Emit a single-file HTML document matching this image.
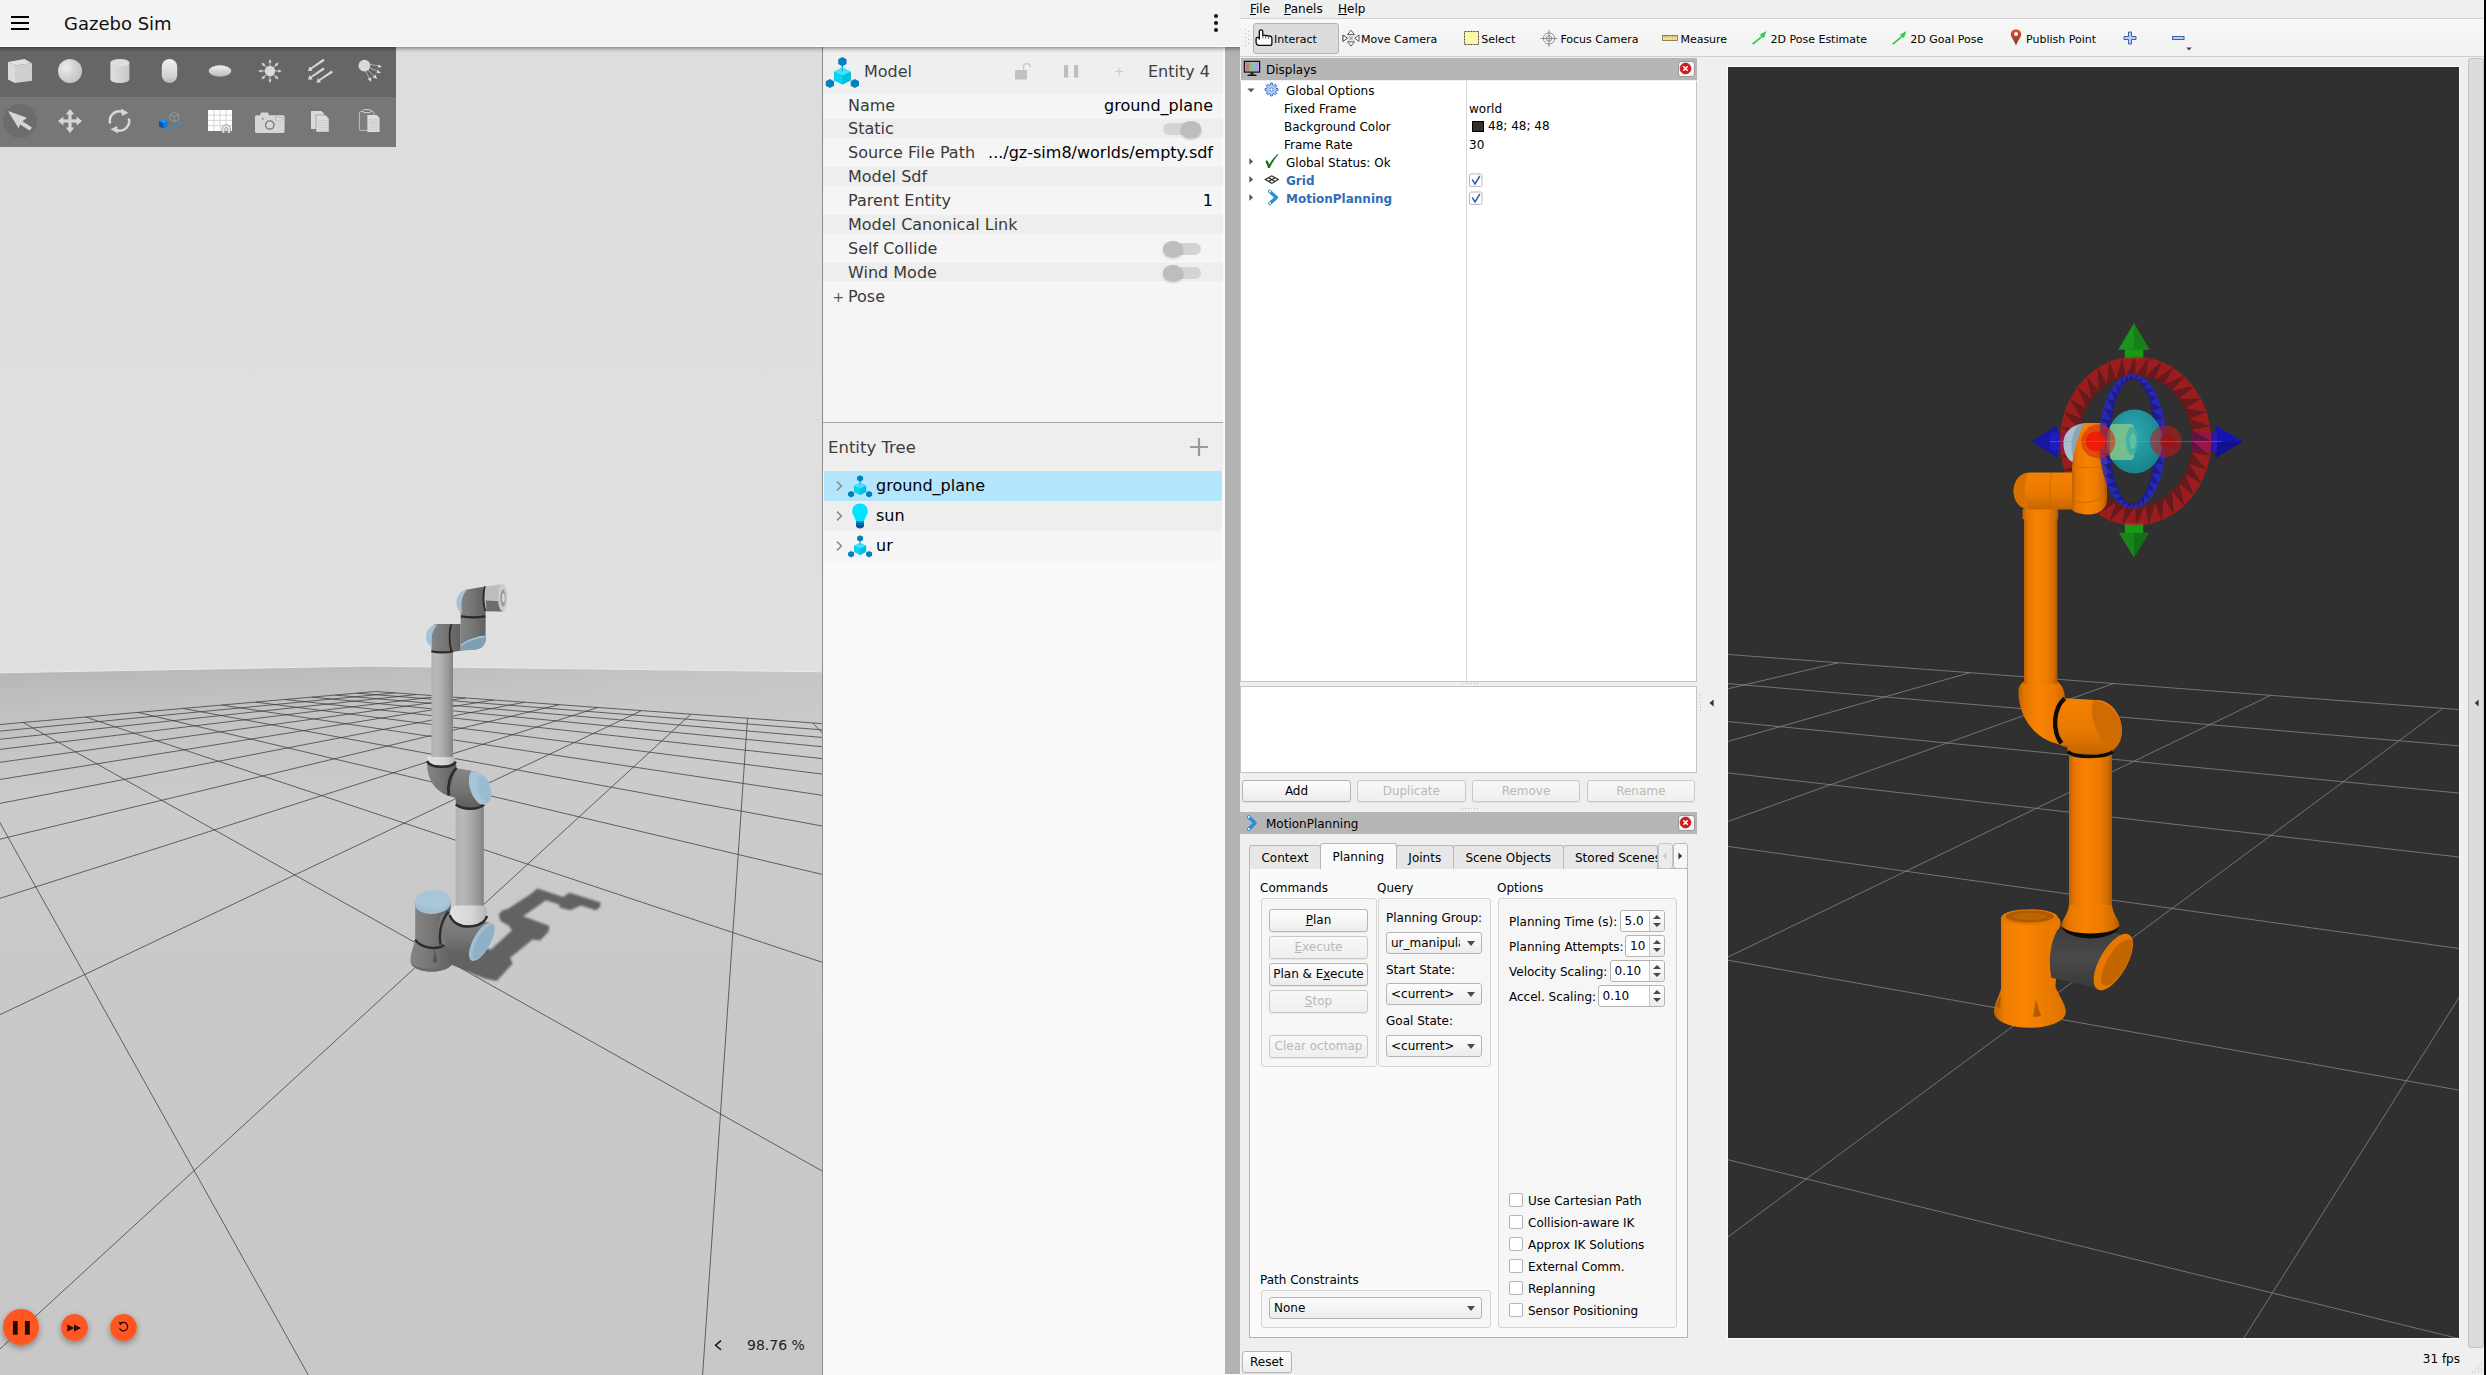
<!DOCTYPE html>
<html><head><meta charset="utf-8"><title>Gazebo Sim + RViz</title>
<style>
*{box-sizing:border-box;margin:0;padding:0}
html,body{width:2486px;height:1375px;overflow:hidden;background:#efefef;font-family:"DejaVu Sans","Liberation Sans",sans-serif;color:#000}
.abs{position:absolute}
#gz{position:absolute;left:0;top:0;width:1240px;height:1375px;background:#fafafa;overflow:hidden}
#gzhead{position:absolute;left:0;top:0;width:1240px;height:47px;background:#f3f3f3;border-bottom:1px solid #fdfdfd;z-index:5}
#gzshadow{position:absolute;left:0;top:47px;width:1240px;height:6px;background:linear-gradient(rgba(0,0,0,.36),rgba(0,0,0,.16) 35%,rgba(0,0,0,.05) 70%,rgba(0,0,0,0));z-index:5}
#gztitle{position:absolute;left:64px;top:12.5px;font-size:18px;line-height:22px;color:#111;white-space:nowrap}
.bar{position:absolute;left:11px;width:18px;height:2px;background:#000}
.kdot{position:absolute;left:1214px;width:4px;height:4px;border-radius:2px;background:#111}
#view{position:absolute;left:0;top:47px;width:822px;height:1328px;background:#dedede;overflow:hidden}
#tools{position:absolute;left:0;top:0;width:396px;height:100px}
#tools .r1{position:absolute;left:0;top:0;width:396px;height:50px;background:#666}
#tools .r2{position:absolute;left:0;top:50px;width:396px;height:50px;background:#777}
#panel{position:absolute;left:822px;top:47px;width:403px;height:1328px;background:#fafafa;border-left:1px solid #8a8a8a;font-size:16px}
#strip{position:absolute;left:1225px;top:47px;width:15px;height:1327px;background:#b2b2b2}
.prow{position:absolute;left:0;width:400px;height:24px;line-height:24px;white-space:nowrap}
.prow .l{position:absolute;left:25px;top:0;color:#3a3a3a}
.prow .v{position:absolute;right:10px;top:0;color:#000}
.d{background:#eeeeee}.lt{background:#f5f5f5}
.sw{position:absolute;left:340px;top:6px;width:38px;height:12px;border-radius:6px;background:#d4d4d4}
.sw i{position:absolute;top:-2.2px;width:20.4px;height:16.4px;border-radius:50%;background:#bdbdbd;box-shadow:0 1.5px 2.5px rgba(0,0,0,.22)}
.trow{position:absolute;left:1px;width:398px;height:30px;line-height:30px;white-space:nowrap}
.trow span{position:absolute;left:52px;top:0}
/* rviz */
#rv{position:absolute;left:1240px;top:0;width:1246px;height:1375px;background:#efefef;font-size:12px;color:#000}
#rv .t{position:absolute;white-space:nowrap;line-height:16px}
.dock{position:absolute;left:1px;width:456px;height:22px;background:#b6b6b6}
.xbtn{position:absolute;width:17px;height:16px;border:1px solid #9a9a9a;border-radius:3px;background:#f4f4f4}
.btn{position:absolute;height:22.5px;border:1px solid #b4b4b4;border-radius:3px;background:linear-gradient(#fdfdfd,#ececec);text-align:center;line-height:21px;white-space:nowrap;box-shadow:0 1px 0 rgba(0,0,0,.06)}
.btn.dis{color:#b9b9b9;background:linear-gradient(#f8f8f8,#efefef);border-color:#c9c9c9}
.combo{position:absolute;height:22px;border:1px solid #b4b4b4;border-radius:3px;background:linear-gradient(#fdfdfd,#ececec);line-height:21px;white-space:nowrap;overflow:hidden;padding-left:4px}
.combo:after{content:"";position:absolute;right:6px;top:8px;border-left:4px solid transparent;border-right:4px solid transparent;border-top:5px solid #4a4a4a}
.gb{position:absolute;border:1px solid #d4d4d4;border-radius:3px;background:#f6f6f6}
.spin{position:absolute;height:22px;border:1px solid #b4b4b4;border-radius:3px;background:#fff;line-height:21px;padding-left:4px;white-space:nowrap}
.spin b{position:absolute;right:0;top:0;width:15px;height:20px;border-left:1px solid #c8c8c8;background:linear-gradient(#fdfdfd,#ececec);border-radius:0 3px 3px 0}
.spin b:before{content:"";position:absolute;left:3px;top:4px;border-left:4px solid transparent;border-right:4px solid transparent;border-bottom:4px solid #4a4a4a}
.spin b:after{content:"";position:absolute;left:3px;top:12px;border-left:4px solid transparent;border-right:4px solid transparent;border-top:4px solid #4a4a4a}
.cb{position:absolute;width:14px;height:14px;border:1px solid #b4b4b4;border-radius:2px;background:#fff}
.tab{position:absolute;top:845px;height:24px;border:1px solid #b9b9b9;border-bottom:none;border-radius:3px 3px 0 0;background:#e7e7e7;text-align:center;line-height:25px;white-space:nowrap;overflow:hidden}
u{text-decoration:underline;text-underline-offset:1px}
</style></head><body>
<div id="gz">
<div id="gzhead">
 <div class="bar" style="top:16px"></div><div class="bar" style="top:22px"></div><div class="bar" style="top:28px"></div>
 <div id="gztitle">Gazebo Sim</div>
 <div class="kdot" style="top:14px"></div><div class="kdot" style="top:21px"></div><div class="kdot" style="top:28px"></div>
</div>
<div id="gzshadow"></div>
<div id="view">
<svg class="abs" style="left:0;top:0" width="822" height="1328" viewBox="0 47 822 1328">
<defs>
<linearGradient id="gnd" gradientUnits="userSpaceOnUse" x1="0" y1="666" x2="0" y2="1375"><stop offset="0" stop-color="#c5c5c5"/><stop offset="0.05" stop-color="#c9c9c9"/><stop offset="0.16" stop-color="#cbcbcb"/><stop offset="0.45" stop-color="#c9c9c9"/><stop offset="1" stop-color="#c8c8c8"/></linearGradient>
<linearGradient id="gdk" gradientUnits="userSpaceOnUse" x1="0" y1="666" x2="0" y2="800"><stop offset="0" stop-color="#000" stop-opacity="0.075"/><stop offset="0.35" stop-color="#000" stop-opacity="0.04"/><stop offset="1" stop-color="#000" stop-opacity="0"/></linearGradient>
<linearGradient id="gmx" gradientUnits="userSpaceOnUse" x1="0" y1="0" x2="822" y2="0"><stop offset="0" stop-color="#fff"/><stop offset="0.45" stop-color="#999"/><stop offset="0.75" stop-color="#222"/><stop offset="1" stop-color="#000"/></linearGradient>
<mask id="gmask" maskUnits="userSpaceOnUse" x="0" y="600" width="822" height="300"><rect x="0" y="600" width="822" height="300" fill="url(#gmx)"/></mask>
<linearGradient id="sky" gradientUnits="userSpaceOnUse" x1="0" y1="47" x2="0" y2="670"><stop offset="0" stop-color="#dddddd"/><stop offset="1" stop-color="#e0e0e0"/></linearGradient>
<linearGradient id="tube" x1="0" x2="1" y1="0" y2="0"><stop offset="0" stop-color="#b2b2b2"/><stop offset="0.25" stop-color="#b9b9b9"/><stop offset="0.6" stop-color="#a6a6a6"/><stop offset="0.85" stop-color="#929292"/><stop offset="1" stop-color="#808080"/></linearGradient>
<linearGradient id="jnt" x1="0" x2="1" y1="0" y2="0"><stop offset="0" stop-color="#848484"/><stop offset="0.5" stop-color="#757575"/><stop offset="1" stop-color="#606060"/></linearGradient>
<linearGradient id="jntv" x1="0" x2="0" y1="0" y2="1"><stop offset="0" stop-color="#868686"/><stop offset="0.55" stop-color="#747474"/><stop offset="1" stop-color="#5c5c5c"/></linearGradient>
<linearGradient id="col" x1="0" x2="1" y1="0" y2="0"><stop offset="0" stop-color="#e2e2e2"/><stop offset="0.6" stop-color="#d6d6d6"/><stop offset="1" stop-color="#b4b4b4"/></linearGradient>
<filter id="blur1"><feGaussianBlur stdDeviation="0.9"/></filter>
</defs>
<rect x="0" y="47" width="822" height="640" fill="url(#sky)"/>
<polygon points="0,672.8 367.3,666.1 822,671.8 822,1375 0,1375" fill="url(#gnd)"/>
<polygon points="0,672.8 367.3,666.1 822,671.8 822,800 0,800" fill="url(#gdk)" mask="url(#gmask)"/>
<polyline points="0,672.8 367.3,666.1 822,671.8" fill="none" stroke="#ececec" stroke-width="0.9"/>
<g stroke="#3c3c3c" stroke-width="0.85" stroke-opacity="0.9" fill="none"><line x1="375.7" y1="691.5" x2="-10987.9" y2="1690.6"/><line x1="375.7" y1="691.5" x2="2308.8" y2="830.6"/><line x1="395.3" y1="692.9" x2="-149972.3" y2="15237.8"/><line x1="356.6" y1="693.2" x2="2823.5" y2="887.5"/><line x1="416.6" y1="694.5" x2="-135000.3" y2="15248.7"/><line x1="335.4" y1="695.1" x2="3846.5" y2="1000.6"/><line x1="439.9" y1="696.2" x2="-120028.3" y2="15259.6"/><line x1="311.8" y1="697.1" x2="6864.9" y2="1334.3"/><line x1="465.5" y1="698.0" x2="-105056.4" y2="15270.4"/><line x1="285.4" y1="699.5" x2="134108.1" y2="15444.1"/><line x1="493.6" y1="700.0" x2="-90084.4" y2="15281.3"/><line x1="255.7" y1="702.1" x2="116108.8" y2="15431.1"/><line x1="524.6" y1="702.2" x2="-75112.4" y2="15292.2"/><line x1="221.9" y1="705.1" x2="98109.5" y2="15418.0"/><line x1="559.2" y1="704.7" x2="-60140.4" y2="15303.1"/><line x1="183.1" y1="708.5" x2="80110.2" y2="15404.9"/><line x1="597.9" y1="707.5" x2="-45168.4" y2="15313.9"/><line x1="138.2" y1="712.4" x2="62110.8" y2="15391.8"/><line x1="641.4" y1="710.7" x2="-30196.5" y2="15324.8"/><line x1="85.6" y1="717.0" x2="44111.5" y2="15378.8"/><line x1="690.9" y1="714.2" x2="-15224.5" y2="15335.7"/><line x1="23.1" y1="722.5" x2="26112.2" y2="15365.7"/><line x1="747.5" y1="718.3" x2="-252.5" y2="15346.5"/><line x1="-52.3" y1="729.2" x2="8112.9" y2="15352.6"/><line x1="812.8" y1="723.0" x2="14719.5" y2="15357.4"/><line x1="-145.1" y1="737.3" x2="-9886.4" y2="15339.6"/><line x1="889.3" y1="728.5" x2="29691.4" y2="15368.3"/><line x1="-262.1" y1="747.6" x2="-27885.7" y2="15326.5"/><line x1="979.8" y1="735.0" x2="44663.4" y2="15379.2"/><line x1="-414.3" y1="761.0" x2="-45885.0" y2="15313.4"/><line x1="1088.7" y1="742.8" x2="59635.4" y2="15390.0"/><line x1="-620.2" y1="779.1" x2="-63884.3" y2="15300.3"/><line x1="1222.3" y1="752.5" x2="74607.4" y2="15400.9"/><line x1="-914.4" y1="805.0" x2="-81883.6" y2="15287.3"/><line x1="1390.0" y1="764.5" x2="89579.4" y2="15411.8"/><line x1="-1369.4" y1="845.0" x2="-99882.9" y2="15274.2"/><line x1="1606.7" y1="780.1" x2="104551.3" y2="15422.7"/><line x1="-2166.3" y1="915.0" x2="-117882.2" y2="15261.1"/><line x1="1897.6" y1="801.1" x2="119523.3" y2="15433.5"/><line x1="-3922.5" y1="1069.4" x2="-135881.5" y2="15248.0"/><line x1="2308.8" y1="830.6" x2="134495.3" y2="15444.4"/><line x1="-10987.9" y1="1690.6" x2="-153880.9" y2="15235.0"/></g>
<polygon filter="url(#blur1)" fill="#626262" points="537.4,888.4 562.9,896.9 569.5,892.7 600.7,902.6 599.8,907.3 596.0,910.2 580.9,905.5 570.5,910.2 560.1,907.8 559.1,904.5 545.9,900.3 523.2,916.3 549.2,925.8 548.7,931.4 540.2,940.4 532.6,939.5 510.0,957.9 512.8,963.6 496.7,981.1 485.4,978.7 475.9,974.9 448,960 470,945 491,949.4 511.8,930.5 509,925.8 500.5,921 498.6,914.4 502.4,910.6 508.1,908.8 530.8,894.1"/>
<polygon fill="#626262" points="441,944 470,957 478,975 452,965"/>
<path d="M415,941 C413,948 410.4,954 410.4,961 C410.4,967 419.5,971.6 431.6,971.6 C443.8,971.6 452.9,967 452.9,961 C452.9,954 446,948 444.4,941 Z" fill="url(#jnt)"/><path d="M410.6,962 C411,967 419.500,971.6 431.6,971.6 C443.8,971.6 452.6,967 452.800,962 C452,966 443,968.6 431.6,968.6 C420,968.6 411.6,966 410.6,962 Z" fill="#6a6a6a"/><path d="M434.600,949 L432.8,962.6 L437.400,962 Z" fill="#565656"/><path d="M415.2,903 V941 C418,946 427,948.4 433,948.2 C438,948 442,946.6 444.4,944.6 L450.6,930 V903 Z" fill="url(#jnt)"/><path d="M446,914 L489.3,922.4 L470.300,958.4 L441,945.4 Z" fill="url(#jntv)"/><path d="M441.6,913.4 C438.4,921 437.600,933 439.400,941.6 C441,944.6 444,946.4 446.4,946.6 C443,937 443.600,924 447.800,914.600 Z" fill="#7a7a7a"/><path d="M415.2,939.6 C419,945.6 428,948.2 434,948 C439,947.8 442.4,946.4 444.2,944.8" fill="none" stroke="#2c2c2c" stroke-width="2.4"/><path d="M448.6,911.6 C441.6,919.6 438.4,932 440.6,944.6" fill="none" stroke="#2e2e2e" stroke-width="2.4"/><path d="M415.400,903.6 C415.4,896 423,890.2 433,890.2 C443,890.2 450.8,895 450.8,901 C450.8,904 449.6,907 447.6,909 C443,912.4 437,914 431,914 C424,914 418,911 415.400,907 Z" fill="#a5bfd1"/><ellipse cx="433" cy="899.8" rx="17.3" ry="9.5" fill="#a9c5d8"/><ellipse cx="481.8" cy="941.6" rx="8.6" ry="21.6" transform="rotate(29 481.8 941.6)" fill="#a3bed0"/><ellipse cx="483.4" cy="942" rx="6.6" ry="19.4" transform="rotate(29 483.4 942)" fill="#8fb0c6"/><rect x="455.6" y="806" width="28.2" height="108" fill="url(#tube)"/><path d="M449.800,913.6 C450,908 455,905.800 455.600,905.6 H483.600 C485,906 487,909 487,914 C487,918 484,925.4 468.4,925.4 C453,925.4 450,918 449.800,913.6 Z" fill="url(#col)"/><path d="M449.800,915 C452,922.4 460,926.6 468.400,926.6 C478,926.6 485,922.4 487,916" fill="none" stroke="#2a2a2a" stroke-width="2.5"/><path d="M427,763 C427,780 436,792 449.400,796 L456,798 L456.400,766 L455.800,763 Z" fill="url(#jnt)"/><path d="M449.200,795 L455.800,768 L476,771.4 L486,803 C481,807 476,808.4 470,808.4 C464,808.4 458.800,807 455.800,804.6 L455.800,798 Z" fill="url(#jntv)"/><path d="M456.6,768 C449.6,775 447,786 448.8,795.6" fill="none" stroke="#2b2b2b" stroke-width="2.6"/><path d="M455.800,804.4 C459,807.4 464,808.8 470,808.8 C476,808.8 481,807.4 484.200,804.4" fill="none" stroke="#2b2b2b" stroke-width="2.6"/><path d="M471.6,771.6 C478,770 487,776 490.4,785.6 C493,793.600 491,801.6 486.400,804 C484,805 481,804.6 479,803.4 C472,798 468,786 469,778 C469.400,774.600 470.400,772.400 471.600,771.600 Z" fill="#a7c4d8"/><ellipse cx="484" cy="789" rx="6.2" ry="14.4" transform="rotate(-14 484 789)" fill="#9bbbd0"/><path d="M427.400,757.6 C429,756.4 431,756 431.400,756 H452 C454,756.2 455.400,757.6 455.400,760 C455.400,763.6 449,765.800 441.400,765.800 C433,765.800 427.400,763.600 427.400,760 Z" fill="url(#col)"/><path d="M427.200,761 C429,765 435,766.800 441.400,766.800 C448,766.800 454,765 455.800,761.600" fill="none" stroke="#2b2b2b" stroke-width="2.6"/><rect x="431.4" y="652" width="21.6" height="105" fill="url(#tube)"/><path d="M431.4,652 V630 C431.400,626 434,624 437,624 H460.600 V650.800 L453.200,651.8 Z" fill="url(#jnt)"/><path d="M437.800,624.4 C431,624.8 426,630 426,636 C426,641.6 428.600,645.6 432,646.6 C430.400,640 431.600,630 437.800,624.400 Z" fill="#a5c2d6"/><path d="M431.4,651.2 C437,652.8 447,652.8 453.2,651.2" fill="none" stroke="#2a2a2a" stroke-width="2.1"/><path d="M451.4,624.4 C449,631 449,643 451.400,651" fill="none" stroke="#2a2a2a" stroke-width="1.8"/><path d="M460.600,650.800 V600 H485.600 V640 C485.600,645 480,649.800 473,649.800 C468,649.800 463,650.400 460.600,650.800 Z" fill="url(#jnt)"/><path d="M460.600,646 C466,640.6 478,636.4 485.400,636.400 C486.400,640 484.400,646.400 480,648.600 C474,650.400 465,650.600 460.600,649.800 Z" fill="#7ea0b6"/><path d="M460.800,645.8 C466,640.6 478,636.4 485.400,636.400" fill="none" stroke="#a6c3d6" stroke-width="1.6"/><path d="M461,616.4 C468,617.6 478,617.600 485.400,616.400" fill="none" stroke="#2a2a2a" stroke-width="2.1"/><path d="M467,589.600 L485,586.600 V611 L467,613.6 C462,612 460,606 460,601 C460,596 463,590.600 467,589.600 Z" fill="url(#jnt)"/><path d="M467.400,589.400 C461,590 456.400,596 456.400,602 C456.400,607.600 459,612 462.400,613.200 C460.400,606 461.400,595 467.400,589.400 Z" fill="#a5c2d6"/><path d="M485.400,586.400 C482.800,593 482.800,604 485.600,611" fill="none" stroke="#2a2a2a" stroke-width="2"/><path d="M485.800,586.600 L501.600,584.200 C505,584.400 507,590 507,597.600 C507,605 505,611 502.400,611.400 L486.400,611.200 C484,604 484,593 485.800,586.600 Z" fill="#bdbdbd"/><path d="M486,600.6 L503,601.4 L502.400,611.400 L486.400,611.200 Z" fill="#6c6c6c"/><ellipse cx="502.400" cy="597.600" rx="4.400" ry="13.400" fill="#cdcdcd"/><ellipse cx="503" cy="598" rx="2.600" ry="8.600" fill="#9a9a9a"/><ellipse cx="503.400" cy="598" rx="1.4" ry="4.400" fill="#d8d8d8"/>
</svg>
<div id="tools"><div class="r1"></div><div class="r2"></div>
<svg class="abs" style="left:0;top:0" width="396" height="100" viewBox="0 0 396 100">
<defs>
<radialGradient id="gsph" cx="0.33" cy="0.36" r="0.75"><stop offset="0" stop-color="#ececec"/><stop offset="0.6" stop-color="#d0d0d0"/><stop offset="1" stop-color="#c2c2c2"/></radialGradient>
<linearGradient id="gcyl" x1="0" x2="1"><stop offset="0" stop-color="#e0e0e0"/><stop offset="1" stop-color="#c8c8c8"/></linearGradient>
<linearGradient id="gcap" x1="0" x2="0" y1="0" y2="1"><stop offset="0" stop-color="#f0f0f0"/><stop offset="0.75" stop-color="#d2d2d2"/><stop offset="1" stop-color="#b4b4b4"/></linearGradient>
<linearGradient id="gell" x1="0" x2="0" y1="0" y2="1"><stop offset="0" stop-color="#f2f2f2"/><stop offset="1" stop-color="#b8b8b8"/></linearGradient>
</defs>
<!-- box -->
<g transform="translate(8,12)"><polygon points="0,3 16.5,0 24,4.3 7,6.6" fill="#e0e0e0"/><polygon points="0,3 7,6.6 7,24 0,20.5" fill="#dcdcdc"/><polygon points="7,6.6 24,4.3 24,21.8 7,24" fill="#cfcfd1"/></g>
<!-- sphere -->
<circle cx="70" cy="24" r="12" fill="url(#gsph)"/>
<!-- cylinder -->
<g transform="translate(108,12)"><path d="M2.4,3.8 V20.2 A9.5,3.8 0 0 0 21.4,20.2 V3.8 Z" fill="url(#gcyl)"/><ellipse cx="11.9" cy="3.8" rx="9.5" ry="3.8" fill="#dddddd"/></g>
<!-- capsule -->
<rect x="161.8" y="12" width="15.4" height="24" rx="7.7" ry="7.7" fill="url(#gcap)"/>
<!-- ellipsoid -->
<ellipse cx="220" cy="24" rx="11.3" ry="5.7" fill="url(#gell)"/>
<!-- point light -->
<g transform="translate(270,24)" fill="#d9d9d9" stroke="none"><circle r="5.2"/>
<g id="ray"><rect x="-0.4" y="-9" width="0.8" height="4"/><polygon points="0,-12 -1.6,-8.4 1.6,-8.4"/></g>
<use href="#ray" transform="rotate(45)"/><use href="#ray" transform="rotate(90)"/><use href="#ray" transform="rotate(135)"/><use href="#ray" transform="rotate(180)"/><use href="#ray" transform="rotate(225)"/><use href="#ray" transform="rotate(270)"/><use href="#ray" transform="rotate(315)"/></g>
<!-- directional -->
<g transform="translate(308,12)" fill="#d9d9d9"><g id="darr"><polygon points="15.2,-0.2 16.6,1.8 3.6,10.2 4.6,11.8 0,12 1.6,7.4 2.6,8.8"/></g><use href="#darr" transform="translate(0,8.6)"/><use href="#darr" transform="translate(8.4,11.6)"/></g>
<!-- spot -->
<g transform="translate(358,12)" fill="#d9d9d9" stroke="#d9d9d9" stroke-width="0.6"><circle cx="6.4" cy="6.6" r="5.9" stroke="none"/>
<line x1="10" y1="5" x2="21" y2="7"/><polygon points="24,7.4 20.4,5.4 20,9" stroke="none"/>
<line x1="10" y1="8" x2="20" y2="12.5"/><polygon points="23,14 19.6,10.8 18.6,14.2" stroke="none"/>
<line x1="9" y1="10" x2="16.5" y2="17.5"/><polygon points="19,20 17.6,15.6 14.6,18.2" stroke="none"/>
<line x1="7" y1="11" x2="11.5" y2="19.5"/><polygon points="13,23 13.4,18.4 9.6,19.8" stroke="none"/></g>
<!-- row 2 -->
<circle cx="20" cy="74" r="17" fill="#6c6c6c"/>
<polygon transform="translate(8,64)" points="0,0 19,6.8 14.4,10.2 24,16.4 21.6,19.5 12.2,13.4 10.6,17.2" fill="#d6d6d6"/>
<!-- move -->
<g transform="translate(70,74)" fill="#d6d6d6"><rect x="-1.6" y="-8" width="3.2" height="16"/><rect x="-8" y="-1.6" width="16" height="3.2"/><polygon points="0,-12 -4.4,-6.6 4.4,-6.6"/><polygon points="0,12 -4.4,6.6 4.4,6.6"/><polygon points="-12,0 -6.6,-4.4 -6.6,4.4"/><polygon points="12,0 6.6,-4.4 6.6,4.4"/></g>
<!-- rotate -->
<g transform="translate(119.5,74)" fill="none" stroke="#d6d6d6" stroke-width="2.5"><path d="M-9.3,2.6 A9.6,9.6 0 0 1 2.4,-9.3"/><path d="M9.3,-2.6 A9.6,9.6 0 0 1 -2.4,9.3"/><polygon points="9,-8.2 1.4,-12.6 2.4,-5" fill="#d6d6d6" stroke="none"/><polygon points="-9,8.2 -1.4,12.6 -2.4,5" fill="#d6d6d6" stroke="none"/></g>
<!-- snap -->
<g transform="translate(158,62)"><polygon points="5.2,10 9.6,12 9.6,17.4 5.2,19.6 1,17.4 1,12" fill="#1976d2"/><polygon points="5.2,10 9.6,12 5.4,14 1,12" fill="#2196f3"/><polygon points="1,12 5.4,14 5.4,19.6 1,17.4" fill="#0d57a8"/>
<g fill="none" stroke="#9fb0c0" stroke-width="0.6"><polygon points="16.4,3.4 20.6,5.4 20.6,10.6 16.4,12.8 12.2,10.6 12.2,5.4"/><polyline points="12.2,5.4 16.4,7.6 20.6,5.4"/><line x1="16.4" y1="7.6" x2="16.4" y2="12.8"/></g>
<polyline points="9.6,18.6 12,20 22.4,14 20.4,12.6" fill="none" stroke="#2196f3" stroke-width="1.1" stroke-dasharray="2.4,0.5"/></g>
<!-- grid -->
<g transform="translate(208,63)"><rect x="0" y="0" width="24" height="21" fill="#fff"/><g stroke="#cfcfcf" stroke-width="0.9"><line x1="6" y1="0" x2="6" y2="21"/><line x1="12" y1="0" x2="12" y2="21"/><line x1="18" y1="0" x2="18" y2="21"/><line x1="0" y1="5.2" x2="24" y2="5.2"/><line x1="0" y1="10.4" x2="24" y2="10.4"/><line x1="0" y1="15.6" x2="24" y2="15.6"/></g>
<path d="M14,23 V19 A4.2,4.2 0 0 1 22.4,19 V23 H19.6 V19 A1.4,1.4 0 0 0 16.8,19 V23 Z" fill="#e8e8e8" stroke="#8c8c8c" stroke-width="0.8"/></g>
<!-- camera -->
<g transform="translate(255,65)"><path d="M1.4,3.2 H5 L6.2,0.6 H13 L14,3.2 H28 Q29.6,3.2 29.6,4.8 V19.4 Q29.6,21 28,21 H1.4 Q0,21 0,19.4 V4.8 Q0,3.2 1.4,3.2 Z" fill="#d6d6d6"/><circle cx="14.8" cy="13" r="4.2" fill="none" stroke="#757575" stroke-width="1.3"/><rect x="20.6" y="5.6" width="6.4" height="2.4" fill="#e6e6e6" stroke="#9a9a9a" stroke-width="0.5"/><circle cx="7.8" cy="6.8" r="0.9" fill="#777"/></g>
<!-- copy -->
<g transform="translate(311,64)"><path d="M0,0 H10.4 L13,2.6 V18 H0 Z" fill="#d9d9d9"/><path d="M5,4 H14.6 L18,7.4 V21 H5 Z" fill="#dedede" stroke="#777" stroke-width="0.5"/><g stroke="#c4c4c4" stroke-width="0.7"><line x1="6.4" y1="9.4" x2="16.6" y2="9.4"/><line x1="6.4" y1="11.8" x2="16.6" y2="11.8"/><line x1="6.4" y1="14.2" x2="16.6" y2="14.2"/><line x1="6.4" y1="16.6" x2="16.6" y2="16.6"/><line x1="6.4" y1="19" x2="16.6" y2="19"/></g></g>
<!-- paste -->
<g transform="translate(359,62)"><rect x="0.4" y="2.4" width="14.6" height="19" rx="1.6" fill="#7d7d7d" stroke="#dcdcdc" stroke-width="0.7"/><rect x="4" y="0.6" width="8" height="3" rx="1.4" fill="#777" stroke="#dcdcdc" stroke-width="0.9"/><path d="M8.4,6 H17.6 L20.6,9 V23 H8.4 Z" fill="#dedede"/><g stroke="#c2c2c2" stroke-width="0.7"><line x1="9.6" y1="11" x2="19.4" y2="11"/><line x1="9.6" y1="13.4" x2="19.4" y2="13.4"/><line x1="9.6" y1="15.8" x2="19.4" y2="15.8"/><line x1="9.6" y1="18.2" x2="19.4" y2="18.2"/><line x1="9.6" y1="20.6" x2="19.4" y2="20.6"/></g></g>
</svg></div>
<!-- play controls -->
<svg class="abs" style="left:0;top:1250px" width="170" height="78" viewBox="0 0 170 78">
<defs><filter id="ds" x="-40%" y="-40%" width="180%" height="200%"><feDropShadow dx="0" dy="2.6" stdDeviation="3" flood-color="#000" flood-opacity="0.36"/></filter></defs>
<circle cx="21" cy="30" r="18" fill="#ff5722" filter="url(#ds)"/><rect x="12.9" y="24" width="4.8" height="13.7" fill="#2a0a00"/><rect x="24.9" y="24" width="4.9" height="13.7" fill="#2a0a00"/>
<circle cx="74.5" cy="30.400" r="13.4" fill="#ff5722" filter="url(#ds)"/><polygon points="67.4,27.6 74.2,31 67.4,34.4" fill="#2a0a00"/><polygon points="74,27.6 81,31 74,34.400" fill="#2a0a00"/>
<circle cx="123.5" cy="30.400" r="13.4" fill="#ff5722" filter="url(#ds)"/><path d="M120.6,26.6 A4.2,4.2 0 1 1 119.6,31.2" fill="none" stroke="#2a0a00" stroke-width="1.2"/><polygon points="118.6,25 122.6,25.2 120.4,28.400" fill="#2a0a00"/>
</svg>
<svg class="abs" style="left:712px;top:1290px" width="12" height="16" viewBox="0 0 12 16"><polyline points="9,3.6 3.6,8.2 9,12.8" fill="none" stroke="#111" stroke-width="1.5"/></svg>
<div class="abs" style="left:747px;top:1289px;font-size:14px;line-height:18px;color:#222;white-space:nowrap">98.76 %</div>
</div>
<div id="panel">
<svg width="0" height="0" style="position:absolute"><defs>
<g id="modelicon"><g stroke="#0288d1" stroke-width="1.2"><line x1="12" y1="5" x2="12" y2="13"/><line x1="12" y1="13" x2="4" y2="19"/><line x1="12" y1="13" x2="20" y2="19"/></g>
<polygon points="12,7 20,11 20,19.2 12,23.4 4,19.2 4,11" fill="#00c8ea"/><polygon points="12,7 20,11 12,15 4,11" fill="#42e3ff"/><polygon points="12,15 20,11 20,19.2 12,23.4" fill="#00bfe0"/><polygon points="12,15 4,11 4,19.2 12,23.4" fill="#0ad2f2"/>
<line x1="12" y1="7" x2="12" y2="11" stroke="#1ab4dc" stroke-width="1"/>
<polygon points="12,-3 16,-0.8 16,3.6 12,5.8 8,3.6 8,-0.8" fill="#0280be"/><polygon points="0,18 4,20.2 4,24.6 0,26.8 -4,24.6 -4,20.2" fill="#0280be"/><polygon points="24,18 28,20.2 28,24.6 24,26.8 20,24.6 20,20.2" fill="#0280be"/></g>
</defs></svg>
<div class="abs" style="left:0;top:0;width:400px;height:47px;background:#efefef"></div>
<svg class="abs" style="left:0;top:6px" width="44" height="38" viewBox="0 0 44 38"><use href="#modelicon" transform="translate(6.9,7.2) scale(1.04)"/></svg>
<div class="abs" style="left:41px;top:13px;line-height:24px;color:#3d3d3d">Model</div>
<svg class="abs" style="left:190px;top:12px" width="112" height="24" viewBox="0 0 112 24">
<rect x="2" y="11" width="12" height="9.4" rx="1" fill="#c2c2c2"/><path d="M10.6,11 V8 A3.3,3.3 0 0 1 17.2,8" fill="none" stroke="#c9c9c9" stroke-width="1.3"/>
<rect x="51" y="6.2" width="4.2" height="12.4" fill="#bdbdbd"/><rect x="61" y="6.2" width="4.2" height="12.4" fill="#bdbdbd"/>
<path d="M102.4,12.4 H110 M106.2,8.6 V16.2" stroke="#c8c8c8" stroke-width="1"/></svg>
<div class="abs" style="left:325px;top:13px;line-height:24px;color:#3d3d3d;white-space:nowrap">Entity 4</div>
<div class="abs" style="left:0;top:47px;width:400px;height:328px;background:#f5f5f5"></div>
<div class="prow" style="top:46.50px"><span class="l">Name</span><span class="v">ground_plane</span></div>
<div class="abs d" style="left:0;top:72.43px;width:400px;height:18.4px"></div>
<div class="prow" style="top:70.43px"><span class="l">Static</span><div class="sw"><i style="left:17.5px"></i></div></div>
<div class="prow" style="top:94.36px"><span class="l">Source File Path</span><span class="v">.../gz-sim8/worlds/empty.sdf</span></div>
<div class="abs d" style="left:0;top:120.29px;width:400px;height:18.4px"></div>
<div class="prow" style="top:118.29px"><span class="l">Model Sdf</span></div>
<div class="prow" style="top:142.22px"><span class="l">Parent Entity</span><span class="v" style="right:10px">1</span></div>
<div class="abs d" style="left:0;top:168.15px;width:400px;height:18.4px"></div>
<div class="prow" style="top:166.15px"><span class="l">Model Canonical Link</span></div>
<div class="prow" style="top:190.08px"><span class="l">Self Collide</span><div class="sw"><i style="left:0px"></i></div></div>
<div class="abs d" style="left:0;top:216.01px;width:400px;height:18.4px"></div>
<div class="prow" style="top:214.01px"><span class="l">Wind Mode</span><div class="sw"><i style="left:0px"></i></div></div>
<div class="prow" style="top:237.94px"><span class="l" style="left:9.5px;color:#555;font-size:14px">+</span><span class="l">Pose</span></div>
<div class="abs" style="left:0;top:375px;width:400px;height:1px;background:#a8a8a8"></div>
<div class="abs" style="left:0;top:376px;width:400px;height:48px;background:#eeeeee"></div>
<div class="abs" style="left:5px;top:389px;line-height:24px;font-size:16.5px;color:#3d3d3d;white-space:nowrap">Entity Tree</div>
<svg class="abs" style="left:366px;top:390px" width="20" height="20" viewBox="0 0 20 20"><path d="M1,10 H19 M10,1 V19" stroke="#9a9a9a" stroke-width="2.2"/></svg>
<div class="trow" style="top:424px;background:#b3e5fc"><span>ground_plane</span></div>
<div class="trow" style="top:454px;background:#eeeeee"><span>sun</span></div>
<div class="trow" style="top:484px;background:#f5f5f5"><span>ur</span></div>
<svg class="abs" style="left:0;top:424px" width="60" height="92" viewBox="0 0 60 92">
<g fill="none" stroke="#8a8a8a" stroke-width="1.5"><polyline points="14,10.6 18.4,15 14,19.4"/><polyline points="14,40.6 18.4,45 14,49.4"/><polyline points="14,70.6 18.4,75 14,79.4"/></g>
<use href="#modelicon" transform="translate(28.1,6.4) scale(0.75)"/>
<use href="#modelicon" transform="translate(28.1,66.4) scale(0.75)"/>
<g transform="translate(37,45)"><path d="M0,-12.6 C5,-12.6 7.8,-9 7.8,-5 C7.800,-1 4.800,1.6 4,5.400 H-4 C-4.800,1.6 -7.800,-1 -7.800,-5 C-7.800,-9 -5,-12.6 0,-12.600 Z" fill="#00e5ff"/><path d="M-4,5.4 H4 V9.6 Q4,12.4 0,12.4 Q-4,12.4 -4,9.6 Z" fill="#01579b"/><rect x="-4" y="5.4" width="8" height="1.6" fill="#0091c4"/><rect x="-4" y="7.6" width="8" height="1.2" fill="#0277a8"/></g>
</svg>
</div>
<div id="strip"></div>
</div>
<div id="rv">
<!-- menubar -->
<div class="abs" style="left:0;top:0;width:1246px;height:19px;background:#efefef;border-bottom:1px solid #d4d4d4"></div>
<div class="t" style="left:10px;top:1px"><u>F</u>ile</div>
<div class="t" style="left:44px;top:1px"><u>P</u>anels</div>
<div class="t" style="left:98px;top:1px"><u>H</u>elp</div>
<!-- toolbar -->
<div class="abs" style="left:0;top:19px;width:1246px;height:38px;background:linear-gradient(#f8f8f8,#f1f1f1);border-bottom:1px solid #cfcfcf"></div>
<svg class="abs" style="left:4px;top:28px" width="8" height="20" viewBox="0 0 8 20"><g fill="#b9b9b9"><rect x="1" y="1" width="1" height="1"/><rect x="4" y="3" width="1" height="1"/><rect x="1" y="5" width="1" height="1"/><rect x="4" y="7" width="1" height="1"/><rect x="1" y="9" width="1" height="1"/><rect x="4" y="11" width="1" height="1"/><rect x="1" y="13" width="1" height="1"/><rect x="4" y="15" width="1" height="1"/><rect x="1" y="17" width="1" height="1"/></g></svg>
<div class="abs" style="left:13px;top:23px;width:86px;height:31px;background:#dcdcdc;border:1px solid #b3b3b3;border-radius:3px"></div>
<div class="t" style="left:34px;top:31.5px;font-size:11px">Interact</div>
<div class="t" style="left:121px;top:31.5px;font-size:11px">Move Camera</div>
<div class="t" style="left:241.3px;top:31.5px;font-size:11px">Select</div>
<div class="t" style="left:320.4px;top:31.5px;font-size:11px">Focus Camera</div>
<div class="t" style="left:440.4px;top:31.5px;font-size:11px">Measure</div>
<div class="t" style="left:530.5px;top:31.5px;font-size:11px">2D Pose Estimate</div>
<div class="t" style="left:670.2px;top:31.5px;font-size:11px">2D Goal Pose</div>
<div class="t" style="left:786px;top:31.5px;font-size:11px">Publish Point</div>
<svg class="abs" style="left:0;top:19px" width="960" height="38" viewBox="0 0 960 38">
<!-- hand -->
<path d="M19.3,12.2 Q19.3,10.9 21,10.9 Q22.8,10.9 22.8,12.2 V16.6 Q24.4,15.6 25.6,16.8 Q27.2,16 28.4,17.2 Q30,16.6 31.2,17.600 Q31.9,18.2 31.9,19.400 V24.4 Q31.9,26.3 30,26.3 H19.4 Q16.1,26.3 16.1,23 V19.6 Q16.1,18.3 17.600,18.3 Q19.3,18.3 19.3,20 Z" fill="#fff" stroke="#0a0a0a" stroke-width="1.3" stroke-linejoin="round"/>
<path d="M22.8,16.600 V19.600 M25.700,17 V19.800 M28.600,17.400 V20" fill="none" stroke="#555" stroke-width="0.9"/>
<!-- move camera -->
<g transform="translate(111,19.2)" fill="#fff" stroke="#4a4a4a" stroke-width="0.9" stroke-linejoin="round"><polygon points="0,-8 -3.400,-3.600 3.400,-3.600"/><polygon points="0,8 -3.400,3.600 3.400,3.600"/><polygon points="-8,-3.2 -8,3.2 -3.600,0"/><polygon points="8,-3.2 8,3.2 3.600,0"/><polygon points="-8,-3.2 -3.6,0 -8,3.2" /><rect x="-1.6" y="-1.6" width="3.2" height="3.2" fill="#bdbdbd" stroke="none"/><path d="M-3.6,-3.600 L3.600,3.600 M3.600,-3.600 L-3.600,3.600" stroke-width="0.5" stroke-dasharray="1,1"/></g>
<!-- select -->
<rect x="224.500" y="12.500" width="14" height="13" fill="#fdf6a8" stroke="#333" stroke-width="0.9" stroke-dasharray="2,1"/>
<!-- focus -->
<g transform="translate(309,19.500)" fill="none" stroke="#777" stroke-width="0.8"><circle r="5.600"/><circle r="2.800"/><path d="M-8.400,0 H8.400 M0,-8.400 V8.400"/></g>
<!-- measure -->
<rect x="422.500" y="16.500" width="15" height="5" fill="#f2dc8e" stroke="#7a6a3a" stroke-width="0.8"/><path d="M425,16.500 v2 M427.500,16.500 v2 M430,16.500 v2 M432.500,16.500 v2 M435,16.500 v2" stroke="#7a6a3a" stroke-width="0.5"/>
<!-- green arrows -->
<polygon points="512.400,24.600 521.600,17 520.200,15.800 526,12.600 523.800,18.800 522.600,17.800 513.400,25.400" fill="#22d34a" stroke="#12a030" stroke-width="0.3"/>
<polygon points="652.400,24.600 661.600,17 660.200,15.800 666,12.600 663.800,18.800 662.600,17.800 653.400,25.400" fill="#22d34a" stroke="#12a030" stroke-width="0.3"/>
<!-- pin -->
<defs><linearGradient id="pin" x1="0" x2="0" y1="0" y2="1"><stop offset="0" stop-color="#e84b2a"/><stop offset="0.5" stop-color="#b5452a"/><stop offset="1" stop-color="#6a3a20"/></linearGradient></defs>
<path d="M776,26.400 C774,21 770.800,18 770.800,15.400 C770.800,12.400 773,10.600 776,10.600 C779,10.600 781.200,12.400 781.200,15.400 C781.200,18 778,21 776,26.400 Z" fill="url(#pin)"/><circle cx="776" cy="15" r="1.900" fill="#fff"/>
<!-- plus -->
<path d="M888.500,13 h3 v4.500 h4.500 v3 h-4.500 v4.500 h-3 v-4.500 h-4.500 v-3 h4.500 Z" fill="#b8cdf0" stroke="#3a62a8" stroke-width="1"/>
<!-- minus -->
<rect x="932.500" y="17.500" width="11.500" height="3" fill="#b8cdf0" stroke="#3a62a8" stroke-width="1"/>
<polygon points="946.400,28.600 951.600,28.600 949,31.400" fill="#444"/>
</svg>
<!-- Displays dock -->
<div class="dock" style="top:58px"></div>
<svg class="abs" style="left:3px;top:60px" width="18" height="18" viewBox="0 0 18 18"><rect x="1.500" y="1.500" width="15" height="10.500" fill="#fff" stroke="#111" stroke-width="1.400"/><rect x="2.400" y="2.400" width="4.400" height="8.800" fill="#c87a7a"/><rect x="6.800" y="2.400" width="4.400" height="8.800" fill="#84c884"/><rect x="11.200" y="2.400" width="4.400" height="8.800" fill="#a0a0f0"/><rect x="7.600" y="12.600" width="2.800" height="2" fill="#111"/><rect x="4.400" y="14.400" width="9.200" height="1.500" rx="0.7" fill="#111"/></svg>
<div class="t" style="left:26px;top:62px">Displays</div>
<div class="xbtn" style="left:437.5px;top:60.5px;width:17.5px;height:16.5px"></div>
<svg class="abs" style="left:439px;top:62px" width="13" height="13" viewBox="0 0 13 13"><circle cx="6.500" cy="6.500" r="5.400" fill="#d01a20" stroke="#a00e14" stroke-width="0.700"/><path d="M4.300,4.300 L8.700,8.700 M8.700,4.300 L4.300,8.700" stroke="#fff" stroke-width="1.600"/></svg>
<!-- tree -->
<div class="abs" style="left:0;top:81px;width:457px;height:601px;background:#fff;border:1px solid #c4c4c4;border-top:none"></div>
<div class="abs" style="left:226px;top:81px;width:1px;height:600px;background:#d9d9d9"></div>
<div class="t" style="left:46px;top:83px">Global Options</div>
<div class="t" style="left:44px;top:101px">Fixed Frame</div><div class="t" style="left:229px;top:101px">world</div>
<div class="t" style="left:44px;top:119px">Background Color</div><div class="abs" style="left:231.500px;top:120.500px;width:12px;height:11.500px;background:#303030;border:1px solid #000"></div><div class="t" style="left:248px;top:118px">48; 48; 48</div>
<div class="t" style="left:44px;top:137px">Frame Rate</div><div class="t" style="left:229px;top:137px">30</div>
<div class="t" style="left:46px;top:155px">Global Status: Ok</div>
<div class="t" style="left:46px;top:173px;color:#2f6eb5;font-weight:bold">Grid</div>
<div class="t" style="left:46px;top:191px;color:#2f6eb5;font-weight:bold">MotionPlanning</div>
<svg class="abs" style="left:1px;top:81px" width="250" height="130" viewBox="0 0 250 130">
<polygon points="6.400,7.400 13.600,7.400 10,11.200" fill="#555"/>
<polygon points="8.400,77 12,80.400 8.400,83.800" fill="#555"/><polygon points="8.400,95 12,98.400 8.400,101.800" fill="#555"/><polygon points="8.400,113 12,116.400 8.400,119.800" fill="#555"/>
<!-- gear -->
<g transform="translate(30.500,8.5)"><polygon points="4.44,-1.21 6.42,-1.02 6.42,1.02 4.44,1.21 4.00,2.28 5.26,3.82 3.82,5.26 2.28,4.00 1.21,4.44 1.02,6.42 -1.02,6.42 -1.21,4.44 -2.28,4.00 -3.82,5.26 -5.26,3.82 -4.00,2.28 -4.44,1.21 -6.42,1.02 -6.42,-1.02 -4.44,-1.21 -4.00,-2.28 -5.26,-3.82 -3.82,-5.26 -2.28,-4.00 -1.21,-4.44 -1.02,-6.42 1.02,-6.42 1.21,-4.44 2.28,-4.00 3.82,-5.26 5.26,-3.82 4.00,-2.28" fill="#b9cff2" stroke="#3b6fc4" stroke-width="1" stroke-linejoin="round"/><circle r="1.7" fill="#fff" stroke="#3b6fc4" stroke-width="0.9"/></g>
<!-- check -->
<path d="M24.400,80.400 L26,79 C27,80.600 27.800,82 28.400,83.400 C30.400,79.600 33.400,76 37,72.800 L37.400,73.400 C34,77.400 31,82 28.800,87 L27,87 C26.400,84.600 25.600,82.400 24.400,80.400 Z" fill="#1a6e1a"/>
<!-- grid icon -->
<g transform="translate(30.800,98.600)" fill="none" stroke="#222" stroke-width="1.15"><polygon points="-6.400,0 0,-3.800 6.400,0 0,3.800"/><path d="M-3.200,-1.900 L3.200,1.900 M3.200,-1.900 L-3.200,1.900"/></g>
<!-- MP icon -->
<g transform="translate(32.4,116.400)"><path d="M-3.600,-6 L3,0 L-3.600,6" fill="none" stroke="#2b8fd6" stroke-width="3.400" stroke-linejoin="round" stroke-linecap="round"/><circle cx="-3.400" cy="-5.800" r="1" fill="#fff"/><circle cx="-3.400" cy="5.800" r="1" fill="#fff"/></g>
<!-- checkboxes -->
<g><rect x="228.500" y="93" width="12.500" height="12.500" rx="1.500" fill="#fff" stroke="#b9b9b9"/><path d="M231.200,98.400 L234,103 L238.800,95" fill="none" stroke="#2d62b0" stroke-width="1.500"/>
<rect x="228.500" y="111" width="12.500" height="12.500" rx="1.500" fill="#fff" stroke="#b9b9b9"/><path d="M231.200,116.400 L234,121 L238.800,113" fill="none" stroke="#2d62b0" stroke-width="1.500"/></g>
</svg>
<!-- splitter dots + desc -->
<div class="abs" style="left:222px;top:683px;width:18px;height:1px;background:repeating-linear-gradient(90deg,#bdbdbd 0 1px,transparent 1px 3px)"></div>
<div class="abs" style="left:0;top:686px;width:457px;height:87px;background:#fff;border:1px solid #c4c4c4"></div>
<div class="btn" style="left:2px;top:779.5px;width:109px">Add</div>
<div class="btn dis" style="left:117px;top:779.500px;width:108.500px">Duplicate</div>
<div class="btn dis" style="left:232px;top:779.500px;width:108px">Remove</div>
<div class="btn dis" style="left:346.500px;top:779.500px;width:108.500px">Rename</div>
<div class="abs" style="left:222px;top:808px;width:18px;height:1px;background:repeating-linear-gradient(90deg,#bdbdbd 0 1px,transparent 1px 3px)"></div>
<!-- MotionPlanning dock -->
<div class="dock" style="top:812px;left:0;width:457px"></div>
<svg class="abs" style="left:5px;top:814px" width="14" height="18" viewBox="0 0 14 18"><path d="M3.600,2.800 L10,9 L3.600,15.200" fill="none" stroke="#2b8fd6" stroke-width="3.600" stroke-linejoin="round" stroke-linecap="round"/><circle cx="3.800" cy="3" r="1" fill="#fff"/><circle cx="3.800" cy="15" r="1" fill="#fff"/></svg>
<div class="t" style="left:26px;top:816px">MotionPlanning</div>
<div class="xbtn" style="left:437.5px;top:814.5px;width:17.5px;height:16.5px"></div>
<svg class="abs" style="left:439px;top:816px" width="13" height="13" viewBox="0 0 13 13"><circle cx="6.500" cy="6.500" r="5.400" fill="#d01a20" stroke="#a00e14" stroke-width="0.700"/><path d="M4.300,4.300 L8.700,8.700 M8.700,4.300 L4.300,8.700" stroke="#fff" stroke-width="1.600"/></svg>
<!-- tab pane -->
<div class="abs" style="left:9px;top:868px;width:438.5px;height:469.5px;background:#fafafa;border:1px solid #b4b4b4"></div>
<div class="tab" style="left:9px;width:72px">Context</div>
<div class="tab" style="left:156px;width:57.5px">Joints</div>
<div class="tab" style="left:213px;width:110.5px">Scene Objects</div>
<div class="tab" style="left:323px;width:95px;text-align:left;padding-left:11px">Stored Scenes</div>
<div class="tab" style="left:80px;top:843px;height:26px;width:76.5px;background:#fafafa;line-height:26px;z-index:2">Planning</div>
<div class="abs" style="left:417.500px;top:843px;width:15px;height:26px;background:#ececec;border:1px solid #c6c6c6;border-radius:3px"></div>
<div class="abs" style="left:432.500px;top:843px;width:15.500px;height:26px;background:#f6f6f6;border:1px solid #b9b9b9;border-radius:3px"></div>
<svg class="abs" style="left:417px;top:843px" width="32" height="26" viewBox="0 0 32 26"><polygon points="9.600,9.600 9.600,16.400 5.800,13" fill="#c9c9c9"/><polygon points="21.400,9.600 21.400,16.400 25.200,13" fill="#333"/></svg>
<!-- group labels -->
<div class="t" style="left:20px;top:879.500px">Commands</div>
<div class="t" style="left:137px;top:879.500px">Query</div>
<div class="t" style="left:257px;top:879.500px">Options</div>
<div class="gb" style="left:21px;top:898px;width:115.500px;height:168.500px"></div>
<div class="gb" style="left:138px;top:898px;width:113px;height:168.500px"></div>
<div class="gb" style="left:258px;top:898px;width:179px;height:430px"></div>
<div class="btn" style="left:29px;top:909px;width:99px"><u>P</u>lan</div>
<div class="btn dis" style="left:29px;top:936px;width:99px"><u>E</u>xecute</div>
<div class="btn" style="left:29px;top:963px;width:99px">Plan &amp; E<u>x</u>ecute</div>
<div class="btn dis" style="left:29px;top:990px;width:99px"><u>S</u>top</div>
<div class="btn dis" style="left:29px;top:1035px;width:99px">Clear octomap</div>
<div class="t" style="left:146px;top:909.500px">Planning Group:</div>
<div class="combo" style="left:146px;top:932px;width:95.5px"><span style="display:inline-block;width:68.5px;overflow:hidden;vertical-align:top">ur_manipulator</span></div>
<div class="t" style="left:146px;top:962px">Start State:</div>
<div class="combo" style="left:146px;top:983px;width:95.5px">&lt;current&gt;</div>
<div class="t" style="left:146px;top:1012.500px">Goal State:</div>
<div class="combo" style="left:146px;top:1035px;width:95.5px">&lt;current&gt;</div>
<div class="t" style="left:269px;top:914px">Planning Time (s):</div><div class="spin" style="left:379.500px;top:910px;width:45px">5.0<b></b></div>
<div class="t" style="left:269px;top:939px">Planning Attempts:</div><div class="spin" style="left:385px;top:935px;width:39.500px">10<b></b></div>
<div class="t" style="left:269px;top:964px">Velocity Scaling:</div><div class="spin" style="left:369.500px;top:960px;width:55px">0.10<b></b></div>
<div class="t" style="left:269px;top:989px">Accel. Scaling:</div><div class="spin" style="left:357.500px;top:985px;width:67px">0.10<b></b></div>
<div class="cb" style="left:269px;top:1193px"></div><div class="t" style="left:288px;top:1193px">Use Cartesian Path</div>
<div class="cb" style="left:269px;top:1215px"></div><div class="t" style="left:288px;top:1215px">Collision-aware IK</div>
<div class="cb" style="left:269px;top:1237px"></div><div class="t" style="left:288px;top:1237px">Approx IK Solutions</div>
<div class="cb" style="left:269px;top:1259px"></div><div class="t" style="left:288px;top:1259px">External Comm.</div>
<div class="cb" style="left:269px;top:1281px"></div><div class="t" style="left:288px;top:1281px">Replanning</div>
<div class="cb" style="left:269px;top:1303px"></div><div class="t" style="left:288px;top:1303px">Sensor Positioning</div>
<div class="t" style="left:20px;top:1272px">Path Constraints</div>
<div class="gb" style="left:21px;top:1290px;width:230px;height:38px"></div>
<div class="combo" style="left:29px;top:1296.500px;width:212.500px">None</div>
<div class="btn" style="left:2px;top:1351px;width:49.5px;height:22px;line-height:21px">Reset</div>
<!-- 3D view -->
<div class="abs" style="left:487px;top:66px;width:733px;height:1273px;background:#fbfbfb"></div>
<svg class="abs" style="left:488px;top:67px" width="731" height="1271" viewBox="1728 67 731 1271">
<defs>
<linearGradient id="otube" x1="0" x2="1" y1="0" y2="0"><stop offset="0" stop-color="#c06200"/><stop offset="0.12" stop-color="#e47600"/><stop offset="0.4" stop-color="#f98300"/><stop offset="0.7" stop-color="#ee7c00"/><stop offset="0.9" stop-color="#d26c00"/><stop offset="1" stop-color="#aa5700"/></linearGradient>
<linearGradient id="otubev" x1="0" x2="0" y1="0" y2="1"><stop offset="0" stop-color="#f58100"/><stop offset="0.6" stop-color="#e87900"/><stop offset="1" stop-color="#c56500"/></linearGradient>
<linearGradient id="dgray" x1="0" x2="0" y1="0" y2="1"><stop offset="0" stop-color="#3e3e3e"/><stop offset="0.5" stop-color="#494949"/><stop offset="1" stop-color="#3a3a3a"/></linearGradient>
<linearGradient id="obase" x1="0" x2="1" y1="0" y2="0"><stop offset="0" stop-color="#c46400"/><stop offset="0.15" stop-color="#ee7e00"/><stop offset="0.42" stop-color="#f98400"/><stop offset="0.75" stop-color="#ea7b00"/><stop offset="1" stop-color="#dc7200"/></linearGradient>
<radialGradient id="cy" cx="0.45" cy="0.4" r="0.7"><stop offset="0" stop-color="#2ab9c2"/><stop offset="1" stop-color="#14868e"/></radialGradient>
</defs>
<rect x="1728" y="67" width="731" height="1271" fill="#303030"/>
<g stroke="#8a8a8c" stroke-width="0.9" stroke-opacity="0.85" fill="none"><line x1="1716.6" y1="653.6" x2="-4236.2" y2="1852.6"/><line x1="1716.6" y1="653.6" x2="3638.3" y2="798.4"/><line x1="1838.1" y1="662.8" x2="-5238.9" y2="2331.4"/><line x1="1615.2" y1="674.0" x2="3770.9" y2="857.6"/><line x1="1969.9" y1="672.7" x2="-7258.4" y2="3295.8"/><line x1="1493.2" y1="698.6" x2="3954.6" y2="939.4"/><line x1="2113.5" y1="683.5" x2="-13434.0" y2="6245.0"/><line x1="1343.7" y1="728.7" x2="4225.9" y2="1060.3"/><line x1="2270.5" y1="695.4" x2="-57464.6" y2="29501.3"/><line x1="1156.0" y1="766.5" x2="4666.9" y2="1256.9"/><line x1="2442.8" y1="708.3" x2="-36517.3" y2="29514.5"/><line x1="913.6" y1="815.4" x2="5509.6" y2="1632.4"/><line x1="2632.7" y1="722.7" x2="-15570.1" y2="29527.6"/><line x1="588.2" y1="880.9" x2="7761.1" y2="2635.9"/><line x1="2843.3" y1="738.5" x2="5377.2" y2="29540.8"/><line x1="128.5" y1="973.5" x2="32968.3" y2="13870.0"/><line x1="3078.0" y1="756.2" x2="26324.5" y2="29553.9"/><line x1="-570.1" y1="1114.2" x2="27944.9" y2="29555.0"/><line x1="3341.1" y1="776.0" x2="47271.7" y2="29567.1"/><line x1="-1759.4" y1="1353.7" x2="-17090.8" y2="29526.7"/><line x1="3638.3" y1="798.4" x2="68219.0" y2="29580.2"/><line x1="-4236.2" y1="1852.6" x2="-62126.4" y2="29498.4"/></g>
<path d="M2001,917 V989 C1999,996 1994,1004 1994,1012 C1994,1021 2010,1027.8 2029.8,1027.8 C2050,1027.8 2065.8,1021 2065.8,1012 C2065.8,1004 2058,994 2055.4,986.4 L2057.800,960 V917 Z" fill="url(#obase)"/><path d="M2050,917 H2057.800 C2061,920 2062,925 2058,930 L2050,940 Z" fill="#e87a00"/><ellipse cx="2029.6" cy="917" rx="28" ry="7.8" fill="#e27600"/><ellipse cx="2029.6" cy="916.4" rx="24" ry="6" fill="#ad5a00"/><ellipse cx="2029.6" cy="916.4" rx="17" ry="3.6" fill="#c46800" opacity="0.7"/><path d="M2036,1000 L2033,1017 L2041,1016 Z" fill="#b35c00"/><path d="M2001,994 L1996,1006 L2000,1009 Z" fill="#b35c00"/><path d="M2057.800,929.400 L2119.500,933.200 L2094.700,987.500 L2051.500,977.700 C2048,962 2050,942 2057.800,929.400 Z" fill="url(#dgray)"/><ellipse cx="2113.3" cy="962" rx="13.6" ry="31.6" transform="rotate(30 2113.3 962)" fill="#e67800"/><ellipse cx="2116.6" cy="962.6" rx="9.6" ry="26.4" transform="rotate(30 2116.6 962.6)" fill="#c46600"/><rect x="2069" y="752" width="43" height="172" fill="url(#otube)"/><path d="M2069,905 H2112 C2113,915 2119.500,920 2119.500,926 C2119.500,931 2108,935 2090.400,935 C2073,935 2061.400,931 2061.400,926 C2061.400,920 2068,915 2069,905 Z" fill="url(#otube)"/><path d="M2061.400,925.600 C2063,930 2075,933.600 2090.400,933.600 C2106,933.600 2118,930 2119.500,925.600 C2119,932.600 2106,938.400 2090.400,938.400 C2075,938.400 2062,932.600 2061.400,925.600 Z" fill="#0a0a0a"/><path d="M2024,681.600 C2020,684 2018.400,688 2018.400,692 C2018.400,716 2034,738 2056.200,743.400 L2068,748 L2064.800,698 C2064.800,692 2063,686 2057.600,681.600 Z" fill="url(#otube)"/><path d="M2064.700,698.300 L2100,700.200 C2112,702 2122,716 2122,730 C2122,740 2118,747 2112.800,750 V754 H2067.500 V746 L2058,743 C2053,730 2055,710 2064.700,698.300 Z" fill="url(#otubev)"/><path d="M2093,700.4 C2107,700 2121.800,714 2121.800,731 C2121.800,741 2117,748 2110,748.600 C2098,740 2088,716 2093,700.400 Z" fill="#cf6b00"/><path d="M2064.700,698.300 C2053.600,708 2051.600,730 2061.400,743.400" fill="none" stroke="#0c0c0c" stroke-width="4.4"/><path d="M2067.500,751.600 C2072,755.600 2082,756.400 2090,756.400 C2099,756.400 2108,755.400 2112.900,751.600" fill="none" stroke="#0c0c0c" stroke-width="3.6"/><rect x="2024" y="518" width="33.400" height="166" fill="url(#otube)"/><path d="M2022.6,509 H2058.2 V519 C2052,521.6 2030,521.6 2022.6,519 Z" fill="url(#otube)"/>
<g opacity="0.9"><polygon points="2031.200,441.4 2057,425.400 2057,457.400" fill="#1414b0"/><rect x="2050" y="432.800" width="18" height="18" fill="#1a1ad0"/><polygon points="2242.600,441.4 2215.600,425 2215.600,457.800" fill="#1212c0"/><polygon points="2242.600,441.4 2215.600,441.4 2215.600,457.800" fill="#0e0e9a"/><rect x="2191" y="432.500" width="26" height="19" fill="#2a18c0"/></g><g opacity="0.95"><polygon points="2133.9,323.2 2118.300,349.700 2149.500,349.700" fill="#1a9a1a"/><polygon points="2133.9,323.2 2133.9,349.700 2149.500,349.700" fill="#168416"/><rect x="2124.800" y="349.700" width="18.500" height="9" fill="#17a017"/><polygon points="2133.9,557.400 2118.800,532.800 2149,532.800" fill="#178a17"/><polygon points="2133.9,557.400 2133.9,532.800 2149,532.800" fill="#137413"/><rect x="2124.800" y="523" width="18.500" height="10" fill="#17a017"/></g><g opacity="0.7"><polygon points="2211.4,441.0 2210.2,455.7 2192.2,441.0" fill="#c81416"/><polygon points="2210.2,455.7 2191.3,452.3 2192.2,441.0" fill="#7d1113"/><polygon points="2210.2,455.7 2206.8,469.9 2191.3,452.3" fill="#c81416"/><polygon points="2206.8,469.9 2188.8,463.3 2191.3,452.3" fill="#7d1113"/><polygon points="2206.8,469.9 2201.2,483.3 2188.8,463.3" fill="#c81416"/><polygon points="2201.2,483.3 2184.6,473.6 2188.8,463.3" fill="#7d1113"/><polygon points="2201.2,483.3 2193.6,495.4 2184.6,473.6" fill="#c81416"/><polygon points="2193.6,495.4 2178.9,482.9 2184.6,473.6" fill="#7d1113"/><polygon points="2193.6,495.4 2184.3,505.8 2178.9,482.9" fill="#c81416"/><polygon points="2184.3,505.8 2171.9,490.9 2178.9,482.9" fill="#7d1113"/><polygon points="2184.3,505.8 2173.4,514.3 2171.9,490.9" fill="#c81416"/><polygon points="2173.4,514.3 2163.8,497.5 2171.9,490.9" fill="#7d1113"/><polygon points="2173.4,514.3 2161.5,520.5 2163.8,497.5" fill="#c81416"/><polygon points="2161.5,520.5 2154.9,502.3 2163.8,497.5" fill="#7d1113"/><polygon points="2161.5,520.5 2148.7,524.3 2154.9,502.3" fill="#c81416"/><polygon points="2148.7,524.3 2145.3,505.2 2154.9,502.3" fill="#7d1113"/><polygon points="2148.7,524.3 2135.5,525.6 2145.3,505.2" fill="#c81416"/><polygon points="2135.5,525.6 2135.5,506.2 2145.3,505.2" fill="#7d1113"/><polygon points="2135.5,525.6 2122.3,524.3 2135.5,506.2" fill="#c81416"/><polygon points="2122.3,524.3 2125.7,505.2 2135.5,506.2" fill="#7d1113"/><polygon points="2122.3,524.3 2109.5,520.5 2125.7,505.2" fill="#c81416"/><polygon points="2109.5,520.5 2116.1,502.3 2125.7,505.2" fill="#7d1113"/><polygon points="2109.5,520.5 2097.6,514.3 2116.1,502.3" fill="#c81416"/><polygon points="2097.6,514.3 2107.2,497.5 2116.1,502.3" fill="#7d1113"/><polygon points="2097.6,514.3 2086.7,505.8 2107.2,497.5" fill="#c81416"/><polygon points="2086.7,505.8 2099.1,490.9 2107.2,497.5" fill="#7d1113"/><polygon points="2086.7,505.8 2077.4,495.4 2099.1,490.9" fill="#c81416"/><polygon points="2077.4,495.4 2092.1,482.9 2099.1,490.9" fill="#7d1113"/><polygon points="2077.4,495.4 2069.8,483.3 2092.1,482.9" fill="#c81416"/><polygon points="2069.8,483.3 2086.4,473.6 2092.1,482.9" fill="#7d1113"/><polygon points="2069.8,483.3 2064.2,469.9 2086.4,473.6" fill="#c81416"/><polygon points="2064.2,469.9 2082.2,463.3 2086.4,473.6" fill="#7d1113"/><polygon points="2064.2,469.9 2060.8,455.7 2082.2,463.3" fill="#c81416"/><polygon points="2060.8,455.7 2079.7,452.3 2082.2,463.3" fill="#7d1113"/><polygon points="2060.8,455.7 2059.6,441.0 2079.7,452.3" fill="#c81416"/><polygon points="2059.6,441.0 2078.8,441.0 2079.7,452.3" fill="#7d1113"/><polygon points="2059.6,441.0 2060.8,426.3 2078.8,441.0" fill="#c81416"/><polygon points="2060.8,426.3 2079.7,429.7 2078.8,441.0" fill="#7d1113"/><polygon points="2060.8,426.3 2064.2,412.1 2079.7,429.7" fill="#c81416"/><polygon points="2064.2,412.1 2082.2,418.7 2079.7,429.7" fill="#7d1113"/><polygon points="2064.2,412.1 2069.8,398.7 2082.2,418.7" fill="#c81416"/><polygon points="2069.8,398.7 2086.4,408.4 2082.2,418.7" fill="#7d1113"/><polygon points="2069.8,398.7 2077.4,386.6 2086.4,408.4" fill="#c81416"/><polygon points="2077.4,386.6 2092.1,399.1 2086.4,408.4" fill="#7d1113"/><polygon points="2077.4,386.6 2086.7,376.2 2092.1,399.1" fill="#c81416"/><polygon points="2086.7,376.2 2099.1,391.1 2092.1,399.1" fill="#7d1113"/><polygon points="2086.7,376.2 2097.6,367.7 2099.1,391.1" fill="#c81416"/><polygon points="2097.6,367.7 2107.2,384.5 2099.1,391.1" fill="#7d1113"/><polygon points="2097.6,367.7 2109.5,361.5 2107.2,384.5" fill="#c81416"/><polygon points="2109.5,361.5 2116.1,379.7 2107.2,384.5" fill="#7d1113"/><polygon points="2109.5,361.5 2122.3,357.7 2116.1,379.7" fill="#c81416"/><polygon points="2122.3,357.7 2125.7,376.8 2116.1,379.7" fill="#7d1113"/><polygon points="2122.3,357.7 2135.5,356.4 2125.7,376.8" fill="#c81416"/><polygon points="2135.5,356.4 2135.5,375.8 2125.7,376.8" fill="#7d1113"/><polygon points="2135.5,356.4 2148.7,357.7 2135.5,375.8" fill="#c81416"/><polygon points="2148.7,357.7 2145.3,376.8 2135.5,375.8" fill="#7d1113"/><polygon points="2148.7,357.7 2161.5,361.5 2145.3,376.8" fill="#c81416"/><polygon points="2161.5,361.5 2154.9,379.7 2145.3,376.8" fill="#7d1113"/><polygon points="2161.5,361.5 2173.4,367.7 2154.9,379.7" fill="#c81416"/><polygon points="2173.4,367.7 2163.8,384.5 2154.9,379.7" fill="#7d1113"/><polygon points="2173.4,367.7 2184.3,376.2 2163.8,384.5" fill="#c81416"/><polygon points="2184.3,376.2 2171.9,391.1 2163.8,384.5" fill="#7d1113"/><polygon points="2184.3,376.2 2193.6,386.6 2171.9,391.1" fill="#c81416"/><polygon points="2193.6,386.6 2178.9,399.1 2171.9,391.1" fill="#7d1113"/><polygon points="2193.6,386.6 2201.2,398.7 2178.9,399.1" fill="#c81416"/><polygon points="2201.2,398.7 2184.6,408.4 2178.9,399.1" fill="#7d1113"/><polygon points="2201.2,398.7 2206.8,412.1 2184.6,408.4" fill="#c81416"/><polygon points="2206.8,412.1 2188.8,418.7 2184.6,408.4" fill="#7d1113"/><polygon points="2206.8,412.1 2210.2,426.3 2188.8,418.7" fill="#c81416"/><polygon points="2210.2,426.3 2191.3,429.7 2188.8,418.7" fill="#7d1113"/><polygon points="2210.2,426.3 2211.4,441.0 2191.3,429.7" fill="#c81416"/><polygon points="2211.4,441.0 2192.2,441.0 2191.3,429.7" fill="#7d1113"/></g>
<path d="M2086,423.4 C2073,423.4 2063.400,432 2063.400,442.400 C2063.400,452 2067,459 2072,461.800 L2086,461.800 Z" fill="#a9bfd1"/><path d="M2080,423.8 C2071,430 2069,452 2075,461.8 L2086,461.8 L2086,423.4 Z" fill="#8ba5b8"/><path d="M2030,472.400 H2080 V509.600 H2030 C2020,509.600 2013.600,501 2013.600,491 C2013.600,481 2020,472.400 2030,472.400 Z" fill="url(#otubev)"/><path d="M2030,472.400 C2020,472.400 2013.600,481 2013.600,491 C2013.600,501 2020,509.600 2030,509.600 C2024,503 2022,480 2030,472.400 Z" fill="#d87000"/><path d="M2052,473 C2049,484 2049,499 2052,509" fill="none" stroke="#c76600" stroke-width="0.8"/><path d="M2084,423 H2107 V500 C2107,508 2099,514.600 2089,514.600 C2080,514.600 2073,512 2072,509.600 V468 C2073,452 2078,436 2084,423 Z" fill="url(#otube)"/><path d="M2073,500 C2082,505 2098,502 2107,494" fill="none" stroke="#c96800" stroke-width="0.9"/><path d="M2072.400,467.400 H2107" fill="none" stroke="#cf6b00" stroke-width="0.8"/>
<g opacity="0.85"><polygon points="2165.9,441.4 2165.4,453.1 2154.7,441.4" fill="#2626d6"/><polygon points="2165.4,453.1 2154.4,452.2 2154.7,441.4" fill="#1a1a96"/><polygon points="2165.4,453.1 2163.9,464.5 2154.4,452.2" fill="#2626d6"/><polygon points="2163.9,464.5 2153.4,462.6 2154.4,452.2" fill="#1a1a96"/><polygon points="2163.9,464.5 2161.4,475.1 2153.4,462.6" fill="#2626d6"/><polygon points="2161.4,475.1 2151.7,472.4 2153.4,462.6" fill="#1a1a96"/><polygon points="2161.4,475.1 2158.1,484.7 2151.7,472.4" fill="#2626d6"/><polygon points="2158.1,484.7 2149.5,481.3 2151.7,472.4" fill="#1a1a96"/><polygon points="2158.1,484.7 2154.0,493.0 2149.5,481.3" fill="#2626d6"/><polygon points="2154.0,493.0 2146.8,488.9 2149.5,481.3" fill="#1a1a96"/><polygon points="2154.0,493.0 2149.2,499.8 2146.8,488.9" fill="#2626d6"/><polygon points="2149.2,499.8 2143.6,495.1 2146.8,488.9" fill="#1a1a96"/><polygon points="2149.2,499.8 2143.9,504.7 2143.6,495.1" fill="#2626d6"/><polygon points="2143.9,504.7 2140.1,499.7 2143.6,495.1" fill="#1a1a96"/><polygon points="2143.9,504.7 2138.3,507.8 2140.1,499.7" fill="#2626d6"/><polygon points="2138.3,507.8 2136.4,502.5 2140.1,499.7" fill="#1a1a96"/><polygon points="2138.3,507.8 2132.5,508.8 2136.4,502.5" fill="#2626d6"/><polygon points="2132.5,508.8 2132.5,503.4 2136.4,502.5" fill="#1a1a96"/><polygon points="2132.5,508.8 2126.7,507.8 2132.5,503.4" fill="#2626d6"/><polygon points="2126.7,507.8 2128.6,502.5 2132.5,503.4" fill="#1a1a96"/><polygon points="2126.7,507.8 2121.1,504.7 2128.6,502.5" fill="#2626d6"/><polygon points="2121.1,504.7 2124.9,499.7 2128.6,502.5" fill="#1a1a96"/><polygon points="2121.1,504.7 2115.8,499.8 2124.9,499.7" fill="#2626d6"/><polygon points="2115.8,499.8 2121.4,495.1 2124.9,499.7" fill="#1a1a96"/><polygon points="2115.8,499.8 2111.0,493.0 2121.4,495.1" fill="#2626d6"/><polygon points="2111.0,493.0 2118.2,488.9 2121.4,495.1" fill="#1a1a96"/><polygon points="2111.0,493.0 2106.9,484.7 2118.2,488.9" fill="#2626d6"/><polygon points="2106.9,484.7 2115.5,481.3 2118.2,488.9" fill="#1a1a96"/><polygon points="2106.9,484.7 2103.6,475.1 2115.5,481.3" fill="#2626d6"/><polygon points="2103.6,475.1 2113.3,472.4 2115.5,481.3" fill="#1a1a96"/><polygon points="2103.6,475.1 2101.1,464.5 2113.3,472.4" fill="#2626d6"/><polygon points="2101.1,464.5 2111.6,462.6 2113.3,472.4" fill="#1a1a96"/><polygon points="2101.1,464.5 2099.6,453.1 2111.6,462.6" fill="#2626d6"/><polygon points="2099.6,453.1 2110.6,452.2 2111.6,462.6" fill="#1a1a96"/><polygon points="2099.6,453.1 2099.1,441.4 2110.6,452.2" fill="#2626d6"/><polygon points="2099.1,441.4 2110.3,441.4 2110.6,452.2" fill="#1a1a96"/><polygon points="2099.1,441.4 2099.6,429.7 2110.3,441.4" fill="#2626d6"/><polygon points="2099.6,429.7 2110.6,430.6 2110.3,441.4" fill="#1a1a96"/><polygon points="2099.6,429.7 2101.1,418.3 2110.6,430.6" fill="#2626d6"/><polygon points="2101.1,418.3 2111.6,420.2 2110.6,430.6" fill="#1a1a96"/><polygon points="2101.1,418.3 2103.6,407.7 2111.6,420.2" fill="#2626d6"/><polygon points="2103.6,407.7 2113.3,410.4 2111.6,420.2" fill="#1a1a96"/><polygon points="2103.6,407.7 2106.9,398.1 2113.3,410.4" fill="#2626d6"/><polygon points="2106.9,398.1 2115.5,401.5 2113.3,410.4" fill="#1a1a96"/><polygon points="2106.9,398.1 2111.0,389.8 2115.5,401.5" fill="#2626d6"/><polygon points="2111.0,389.8 2118.2,393.9 2115.5,401.5" fill="#1a1a96"/><polygon points="2111.0,389.8 2115.8,383.0 2118.2,393.9" fill="#2626d6"/><polygon points="2115.8,383.0 2121.4,387.7 2118.2,393.9" fill="#1a1a96"/><polygon points="2115.8,383.0 2121.1,378.1 2121.4,387.7" fill="#2626d6"/><polygon points="2121.1,378.1 2124.9,383.1 2121.4,387.7" fill="#1a1a96"/><polygon points="2121.1,378.1 2126.7,375.0 2124.9,383.1" fill="#2626d6"/><polygon points="2126.7,375.0 2128.6,380.3 2124.9,383.1" fill="#1a1a96"/><polygon points="2126.7,375.0 2132.5,374.0 2128.6,380.3" fill="#2626d6"/><polygon points="2132.5,374.0 2132.5,379.4 2128.6,380.3" fill="#1a1a96"/><polygon points="2132.5,374.0 2138.3,375.0 2132.5,379.4" fill="#2626d6"/><polygon points="2138.3,375.0 2136.4,380.3 2132.5,379.4" fill="#1a1a96"/><polygon points="2138.3,375.0 2143.9,378.1 2136.4,380.3" fill="#2626d6"/><polygon points="2143.9,378.1 2140.1,383.1 2136.4,380.3" fill="#1a1a96"/><polygon points="2143.9,378.1 2149.2,383.0 2140.1,383.1" fill="#2626d6"/><polygon points="2149.2,383.0 2143.6,387.7 2140.1,383.1" fill="#1a1a96"/><polygon points="2149.2,383.0 2154.0,389.8 2143.6,387.7" fill="#2626d6"/><polygon points="2154.0,389.8 2146.8,393.9 2143.6,387.7" fill="#1a1a96"/><polygon points="2154.0,389.8 2158.1,398.1 2146.8,393.9" fill="#2626d6"/><polygon points="2158.1,398.1 2149.5,401.5 2146.8,393.9" fill="#1a1a96"/><polygon points="2158.1,398.1 2161.4,407.7 2149.5,401.5" fill="#2626d6"/><polygon points="2161.4,407.7 2151.7,410.4 2149.5,401.5" fill="#1a1a96"/><polygon points="2161.4,407.7 2163.9,418.3 2151.7,410.4" fill="#2626d6"/><polygon points="2163.9,418.3 2153.4,420.2 2151.7,410.4" fill="#1a1a96"/><polygon points="2163.9,418.3 2165.4,429.7 2153.4,420.2" fill="#2626d6"/><polygon points="2165.4,429.7 2154.4,430.6 2153.4,420.2" fill="#1a1a96"/><polygon points="2165.4,429.7 2165.9,441.4 2154.4,430.6" fill="#2626d6"/><polygon points="2165.9,441.4 2154.7,441.4 2154.4,430.6" fill="#1a1a96"/></g><ellipse cx="2134.6" cy="441.4" rx="28" ry="32" fill="url(#cy)" opacity="0.9"/><rect x="2110" y="424" width="24" height="36" rx="4" fill="#8cc88a" opacity="0.8"/><ellipse cx="2132" cy="441" rx="6" ry="14" fill="#3fae9e" opacity="0.9"/><ellipse cx="2133" cy="441" rx="3" ry="8" fill="#62c0a0"/><circle cx="2098.300" cy="441.4" r="17" fill="#d42a10" opacity="0.6"/><circle cx="2095.500" cy="441.4" r="10" fill="#f01808" opacity="0.9"/><circle cx="2166" cy="441.400" r="15.800" fill="#b81c1c" opacity="0.6"/><circle cx="2168" cy="441.400" r="8" fill="#a01010" opacity="0.7"/><line x1="2050" y1="441.400" x2="2222" y2="441.400" stroke="#6fbf4f" stroke-width="0.6" opacity="0.7"/>
</svg>
<!-- handles -->
<svg class="abs" style="left:458px;top:690px" width="28" height="30" viewBox="0 0 28 30"><g fill="#c4c4c4"><rect x="2" y="5" width="1" height="1"/><rect x="2" y="8" width="1" height="1"/><rect x="2" y="11" width="1" height="1"/><rect x="2" y="14" width="1" height="1"/><rect x="2" y="17" width="1" height="1"/><rect x="2" y="20" width="1" height="1"/></g><polygon points="15.600,9.600 15.600,16.400 11.400,13" fill="#333"/></svg>
<div class="abs" style="left:1228px;top:58px;width:15.5px;height:1290px;background:#dcdcdc;border:1px solid #c2c2c2;border-radius:3px"></div>
<div class="abs" style="left:1244px;top:0;width:2px;height:1375px;background:#000"></div>
<svg class="abs" style="left:1230px;top:695px" width="14" height="16" viewBox="0 0 14 16"><polygon points="8.600,4.600 8.600,11.400 4.800,8" fill="#333"/></svg>
<div class="t" style="left:1150px;top:1350.5px;width:70px;text-align:right">31 fps</div>
<svg class="abs" style="left:1231px;top:1361px" width="13" height="13" viewBox="0 0 13 13"><g fill="#b5b5b5"><rect x="10" y="1.500" width="1" height="1"/><rect x="7" y="4.500" width="1" height="1"/><rect x="10" y="4.500" width="1" height="1"/><rect x="4" y="7.500" width="1" height="1"/><rect x="7" y="7.500" width="1" height="1"/><rect x="10" y="7.500" width="1" height="1"/><rect x="1" y="10.500" width="1" height="1"/><rect x="4" y="10.500" width="1" height="1"/><rect x="7" y="10.500" width="1" height="1"/><rect x="10" y="10.500" width="1" height="1"/></g></svg>
</div>
</body></html>
